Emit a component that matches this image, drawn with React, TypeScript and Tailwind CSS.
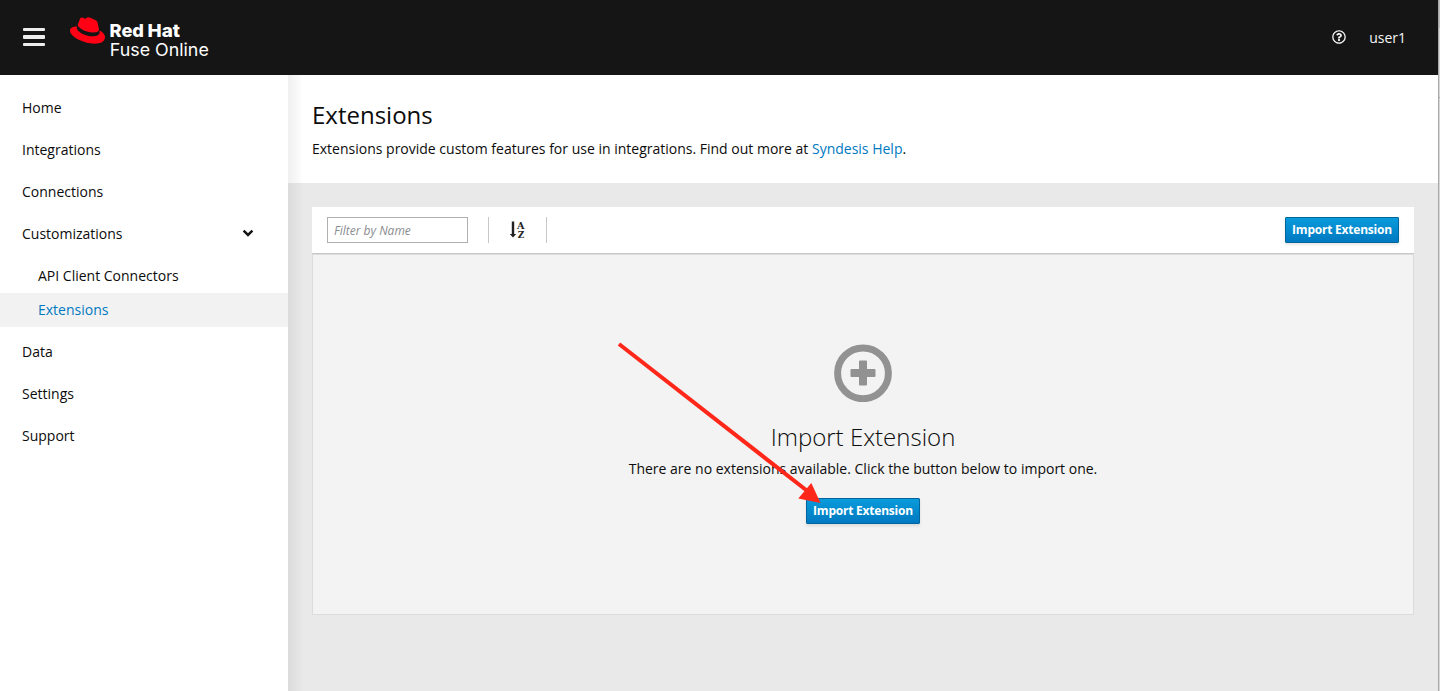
import React from "react";
import { FaRedhat, FaRegQuestionCircle } from "react-icons/fa";

function ImportButton() {
  return (
    <button className="flex h-[26px] w-[114px] shrink-0 items-center justify-center whitespace-nowrap rounded-[1px] border border-[#00659c] bg-linear-to-b from-[#0a9bdb] to-[#0079c1] pb-px text-[12px] font-bold tracking-[-0.22px] text-white shadow-[0_2px_3px_rgba(3,3,3,0.1)]">
      Import Extension
    </button>
  );
}

function NavItem({ label, open }: { label: string; open?: boolean }) {
  return (
    <a className="flex h-[42px] items-center justify-between pr-[35px] pb-[2px] pl-[22px]">
      {label}
      {open && (
        <svg width="12" height="8" viewBox="0 0 12 8" className="-mr-px">
          <path d="M1.6 1.7 6 5.9 10.4 1.7" fill="none" stroke="#151515" strokeWidth="2.5" />
        </svg>
      )}
    </a>
  );
}

function SortIcon() {
  return (
    <svg width="16" height="18" viewBox="0 0 16 18" className="text-[#222]" fill="currentColor">
      <path d="M1.8.5h2.4v12.4h2L3 16.600-.2 12.900h2z" />
      <g fontSize="9" fontWeight="600" fontFamily="DejaVu Serif, serif">
        <text x="7" y="7.600" textLength="7.500" lengthAdjust="spacingAndGlyphs">
          A
        </text>
        <text x="7.700" y="16.600" textLength="6.500" lengthAdjust="spacingAndGlyphs">
          Z
        </text>
      </g>
    </svg>
  );
}

export default function App() {
  return (
    <div className="relative flex h-[691px] w-[1440px] overflow-hidden bg-white font-['Open_Sans',sans-serif] text-[14px] text-[#0c0c0c]">
      <div className="flex w-[1438px] flex-col">
        <header className="flex h-[75px] shrink-0 items-center bg-[#151515] pr-[32px] pl-[23px] text-[#f5f5f5]">
          <div className="mb-px flex w-[22px] flex-col gap-[4px]">
            <i className="h-[3.5px] rounded-[1px] bg-[#ededed]" />
            <i className="h-[3.5px] rounded-[1px] bg-[#ededed]" />
            <i className="h-[3.5px] rounded-[1px] bg-[#ededed]" />
          </div>
          <FaRedhat className="mb-[14px] ml-[25px] size-[35px] shrink-0 text-[#ff0015]" />
          <svg width="104" height="44" viewBox="0 0 104 44" className="ml-[4px]" fill="#fff" fontFamily="Inter, sans-serif">
            <text x="0.5" y="20.9" fontSize="18" fontWeight="800" textLength="34.5" lengthAdjust="spacingAndGlyphs">
              Red
            </text>
            <text x="38.5" y="20.9" fontSize="18" fontWeight="800" textLength="32.5" lengthAdjust="spacingAndGlyphs">
              Hat
            </text>
            <text x="0.8" y="40.4" fontSize="17.5" fontWeight="400" textLength="99" lengthAdjust="spacingAndGlyphs">
              Fuse Online
            </text>
          </svg>
          <FaRegQuestionCircle className="mb-px ml-auto size-[14px]" />
          <span className="ml-[23px]">user1</span>
        </header>
        <div className="flex min-h-0 flex-1">
          <nav className="w-[288px] shrink-0 bg-white pt-[12px]">
            <NavItem label="Home" />
            <NavItem label="Integrations" />
            <NavItem label="Connections" />
            <NavItem label="Customizations" open />
            <div className="py-[4px]">
              <a className="flex h-[34px] items-center pb-[2px] pl-[38px]">API Client Connectors</a>
              <a className="flex h-[34px] items-center bg-[#f2f2f2] pb-[2px] pl-[38px] text-[#0079c1]">Extensions</a>
            </div>
            <NavItem label="Data" />
            <NavItem label="Settings" />
            <NavItem label="Support" />
          </nav>
          <main className="relative flex-1 bg-[#e9e9e9]">
            <div className="pointer-events-none absolute inset-y-0 left-0 w-[16px] bg-linear-to-r from-black/[0.06] to-transparent" />
            <section className="h-[108px] bg-white pt-[22px] pl-[24px]">
              <h1 className="text-[24px] leading-[36px]">Extensions</h1>
              <p className="mt-[5px] leading-[21px]">
                Extensions provide custom features for use in integrations. Find out more at{" "}
                <a className="text-[#0079c1]">Syndesis Help</a>.
              </p>
            </section>
            <section className="mt-[24px] mr-[24px] ml-[24px]">
              <div className="flex h-[47px] items-center border-b border-[#c8c8c8] bg-white px-[15px]">
                <div className="flex h-[26px] w-[141px] items-center border border-[#b0b0b0] pt-px pl-[6px] text-[12px] text-[#8b8d8f] italic">
                  Filter by Name
                </div>
                <div className="ml-[20px] flex h-[26px] w-[59px] items-center justify-center border-x border-[#c8c8c8]">
                  <SortIcon />
                </div>
                <div className="ml-auto">
                  <ImportButton />
                </div>
              </div>
              <div className="flex h-[361px] flex-col items-center border border-[#dcdcdc] bg-[#f3f3f3] pt-[89px]">
                <svg width="58" height="58" viewBox="0 0 58 58" fill="#929292">
                  <circle cx="29" cy="29.3" r="25.4" fill="none" stroke="#929292" strokeWidth="7" />
                  <path d="M26 16.5h6a1 1 0 0 1 1 1V25h7.5a1 1 0 0 1 1 1v6a1 1 0 0 1-1 1H33v7.5a1 1 0 0 1-1 1h-6a1 1 0 0 1-1-1V33h-7.5a1 1 0 0 1-1-1v-6a1 1 0 0 1 1-1H25v-7.5a1 1 0 0 1 1-1z" />
                </svg>
                <h2 className="mt-[17px] text-[24px] leading-[36px] font-light">Import Extension</h2>
                <p className="mt-[3px] mb-[19px] leading-[21px]">
                  There are no extensions available. Click the button below to import one.
                </p>
                <ImportButton />
              </div>
            </section>
          </main>
        </div>
      </div>
      <div className="flex w-[2px] flex-col border-l border-[#a8a8a8] bg-[#d8d8d8]">
        <div className="h-[28px] bg-[#bdbdbd]" />
        <div className="mt-[69px] h-px bg-[#a8a8a8]" />
      </div>
      <svg width="210" height="168" viewBox="0 0 210 168" className="pointer-events-none absolute top-[339px] left-[614px]">
        <path d="M5 5 194 152.5" stroke="#ff2719" strokeWidth="4" />
        <path d="M197.3 144 206.5 164 184.3 159.5z" fill="#ff2719" />
      </svg>
    </div>
  );
}
